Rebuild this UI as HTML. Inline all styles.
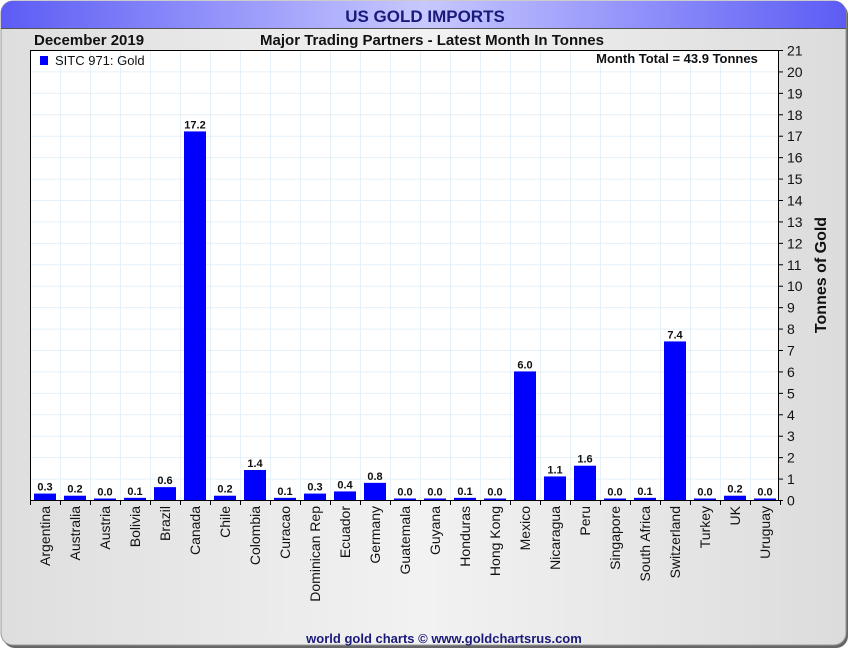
<!DOCTYPE html>
<html><head><meta charset="utf-8"><style>
html,body{margin:0;padding:0;width:850px;height:650px;overflow:hidden;background:#fff}
svg text{font-family:"Liberation Sans",sans-serif}
</style></head><body>
<svg width="850" height="650" viewBox="0 0 850 650" xmlns="http://www.w3.org/2000/svg">
<defs>
<linearGradient id="tb" x1="0" x2="1" y1="0" y2="0">
<stop offset="0" stop-color="#5c5cf5"/><stop offset="0.5" stop-color="#c8c8ff"/><stop offset="1" stop-color="#5c5cf5"/>
</linearGradient>
<linearGradient id="bg" x1="0" x2="1" y1="0" y2="0">
<stop offset="0" stop-color="#dedede"/><stop offset="0.5" stop-color="#f2f2f2"/><stop offset="1" stop-color="#dcdcdc"/>
</linearGradient>
</defs>
<rect x="3" y="3" width="845" height="645" rx="12" fill="#666"/>
<rect x="1" y="1" width="845" height="644" rx="12" fill="url(#bg)" stroke="#999" stroke-width="1"/>
<path d="M1 28 V13 A12 12 0 0 1 13 1 H834 A12 12 0 0 1 846 13 V28 Z" fill="url(#tb)"/>
<line x1="1" y1="28.5" x2="846" y2="28.5" stroke="#555" stroke-width="1"/>
<text x="425" y="22" text-anchor="middle" font-size="17" font-weight="bold" fill="#1a1a7a">US GOLD IMPORTS</text>
<text x="34" y="45" font-size="15" font-weight="bold" fill="#111">December 2019</text>
<text x="432" y="45" text-anchor="middle" font-size="15" font-weight="bold" fill="#111">Major Trading Partners - Latest Month In Tonnes</text>
<rect x="30.5" y="50.5" width="748" height="450" fill="#fff" stroke="#000"/>
<g stroke="#e4f1f9" stroke-width="1" id="grid"></g>
<g id="bars"></g>
<rect x="40" y="56" width="8" height="9" fill="#0000ff"/>
<text x="55" y="65" font-size="13" fill="#111">SITC 971: Gold</text>
<text x="677" y="63" text-anchor="middle" font-size="13" font-weight="bold" fill="#111">Month Total = 43.9 Tonnes</text>
<text transform="translate(826,275) rotate(-90)" text-anchor="middle" font-size="16" font-weight="bold" fill="#111">Tonnes of Gold</text>
<text x="444" y="643" text-anchor="middle" font-size="13" font-weight="bold" fill="#1a1a7a">world gold charts © www.goldchartsrus.com</text>
</svg>
<script>
var ns="http://www.w3.org/2000/svg",s=document.querySelector('svg'),g=document.getElementById('grid'),b=document.getElementById('bars');
function el(p,t,a,tx){var e=document.createElementNS(ns,t);for(var k in a)e.setAttribute(k,a[k]);if(tx!=null)e.textContent=tx;p.appendChild(e);return e;}
var u=450/21;
for(var i=1;i<21;i++){var y=500.5-i*u;el(g,'line',{x1:31,x2:778,y1:y,y2:y});}
for(var i=1;i<25;i++){var x=30.5+i*30;el(g,'line',{x1:x,x2:x,y1:51,y2:500});}
for(var i=0;i<=21;i++){var y=500.5-i*u;el(s,'line',{x1:778,x2:783,y1:y,y2:y,stroke:'#000'});el(s,'text',{x:787,y:y+5,'font-size':14,fill:'#111'},i);}
var d=[["Argentina",.3],["Australia",.2],["Austria",0],["Bolivia",.1],["Brazil",.6],["Canada",17.2],["Chile",.2],["Colombia",1.4],["Curacao",.1],["Dominican Rep",.3],["Ecuador",.4],["Germany",.8],["Guatemala",0],["Guyana",0],["Honduras",.1],["Hong Kong",0],["Mexico",6],["Nicaragua",1.1],["Peru",1.6],["Singapore",0],["South Africa",.1],["Switzerland",7.4],["Turkey",0],["UK",.2],["Uruguay",0]];
d.forEach(function(r,i){var x=30+i*30,h=Math.max(r[1]*u,1.5);
el(b,'rect',{x:x+4,y:500-h,width:22,height:h,fill:'#0000ff'});
el(s,'text',{x:x+15,y:500-h-3,'text-anchor':'middle','font-size':11,'font-weight':'bold',fill:'#111'},r[1].toFixed(1));
el(s,'line',{x1:x+.5,x2:x+.5,y1:500,y2:505,stroke:'#000'});
el(s,'text',{transform:'translate('+(x+20)+',506) rotate(-90)','text-anchor':'end','font-size':14,fill:'#111'},r[0]);});
el(s,'line',{x1:780.5,x2:780.5,y1:500,y2:505,stroke:'#000'});
</script>
</body></html>
